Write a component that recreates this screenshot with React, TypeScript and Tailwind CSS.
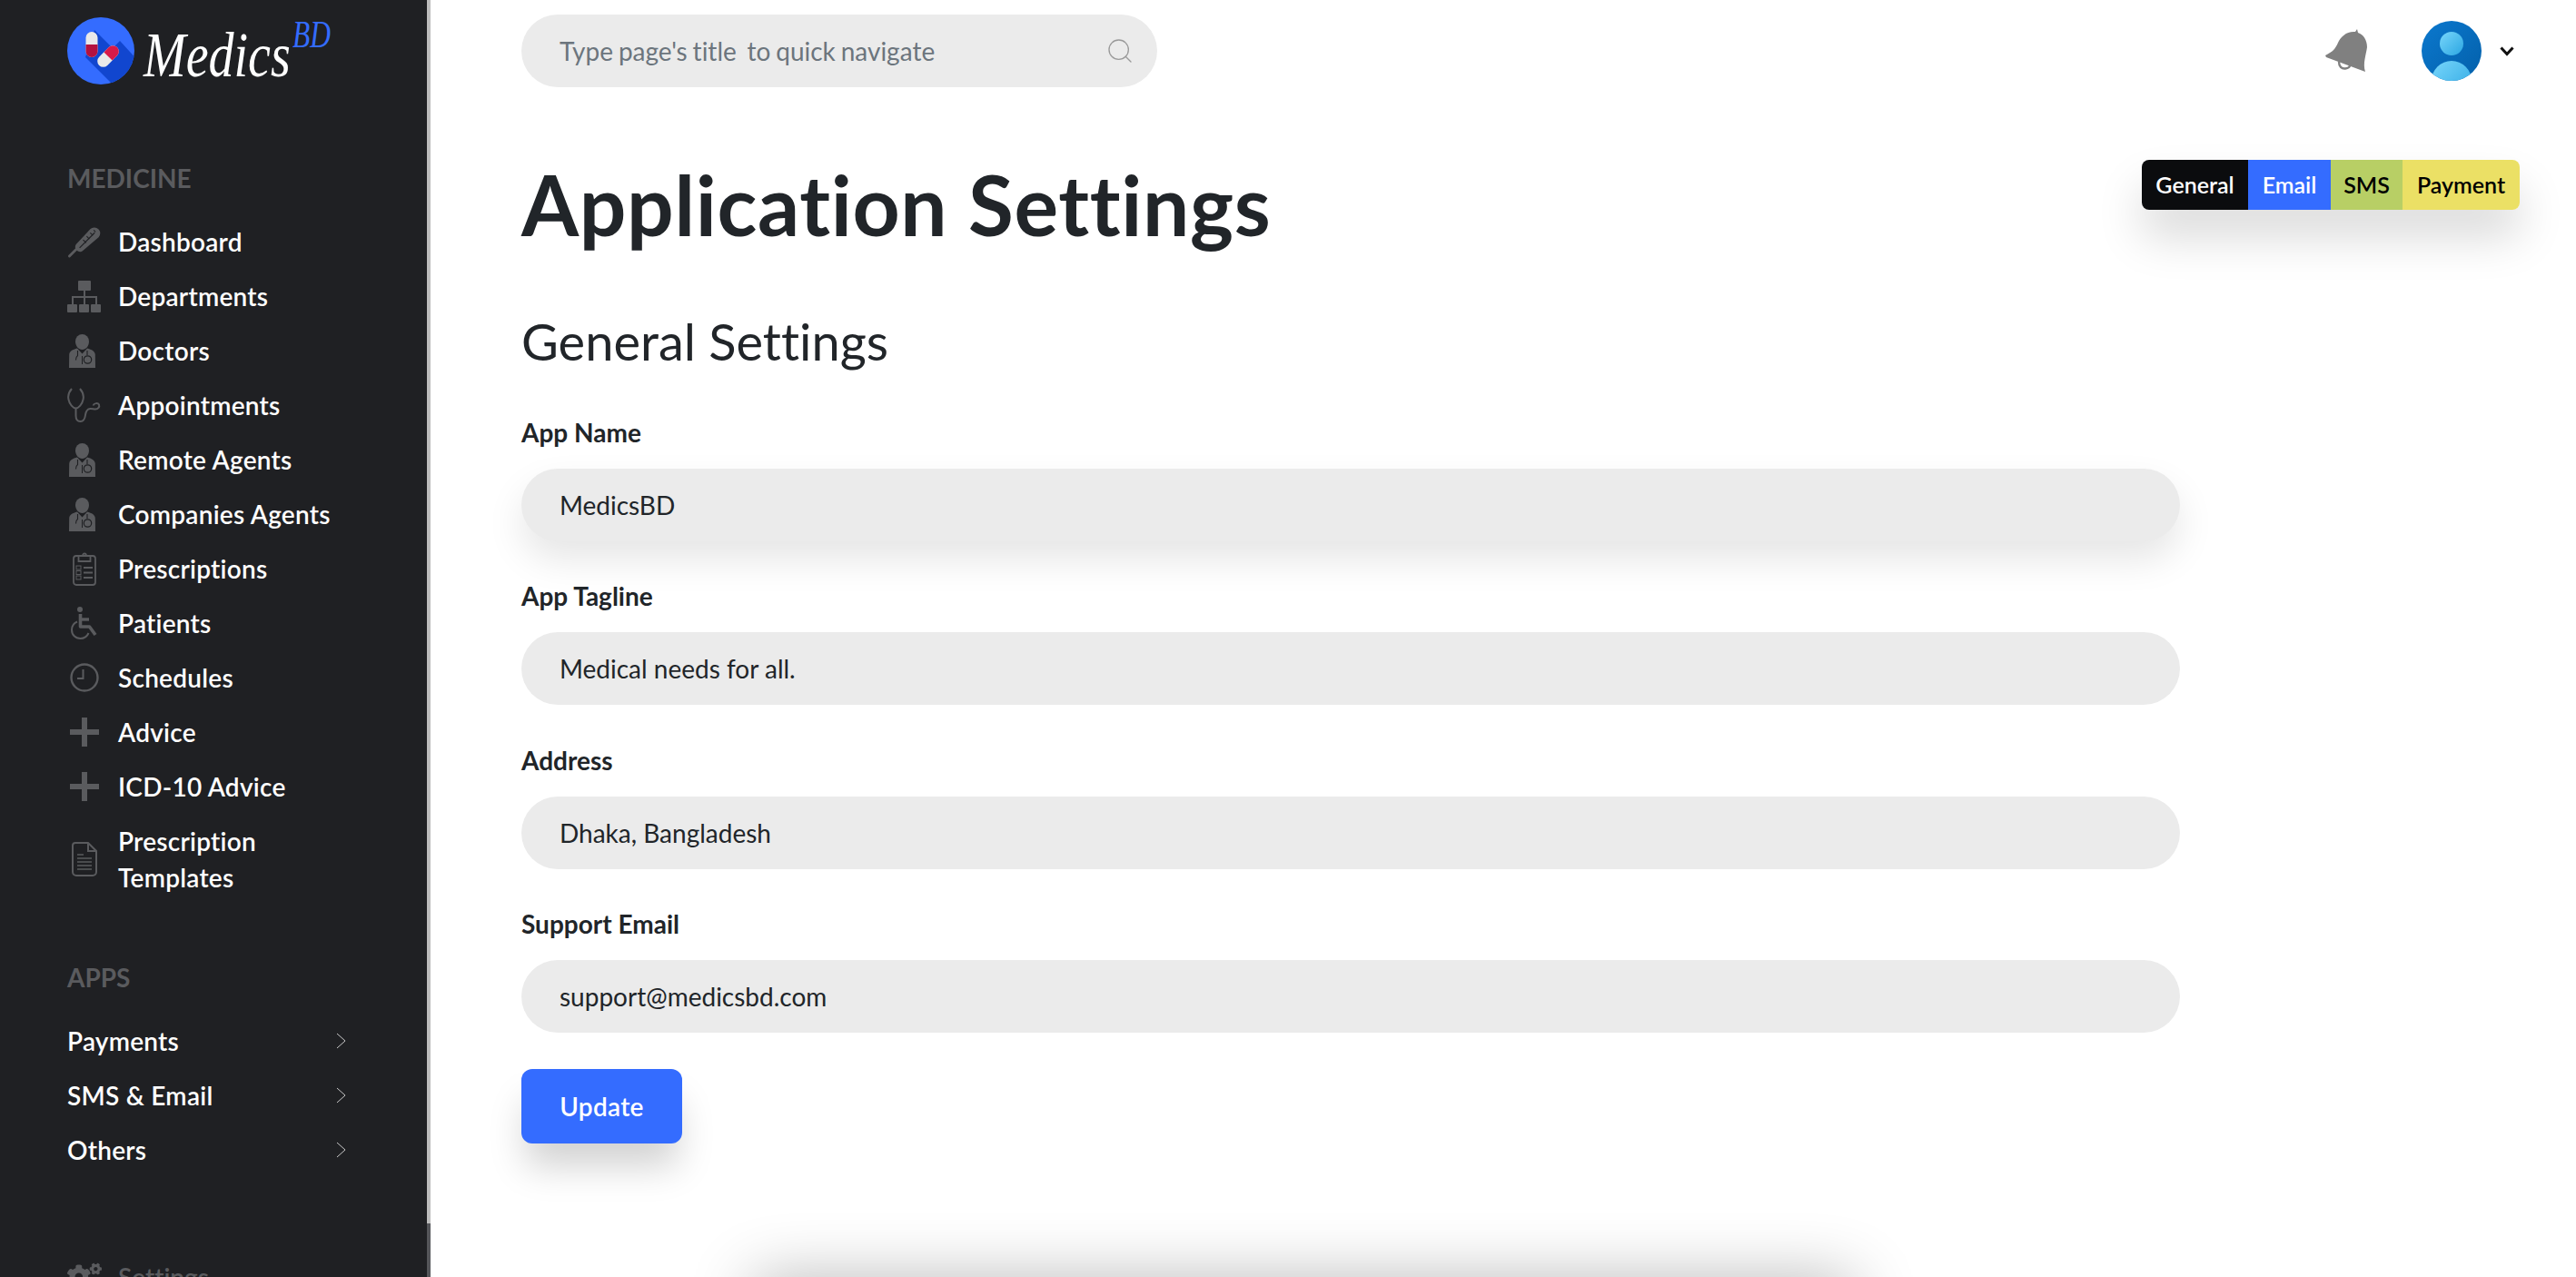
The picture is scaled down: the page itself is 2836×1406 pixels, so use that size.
import React from "react";
import { FaCogs } from "react-icons/fa";
import { Search } from "lucide-react";

const G = "#5a5b5e";
const BG = "#1f2023";

function Thermo() {
  return (
    <svg width="38" height="38" viewBox="0 0 38 38">
      <path d="M2.500 35.500L12 26" stroke={G} strokeWidth="3" strokeLinecap="round" />
      <path d="M10 22L26 5a6.500 6.500 0 0 1 9.500 9L18 29c-3 2.500-5.500 1.500-7 0s-3-4-1-7z" fill={G} />
      <path d="M14 26L31 9" stroke={BG} strokeWidth="1.200" />
      <path d="M18 17l3.500 3.500M22 13l3 3M26 9l3 3M30 6l2 2" stroke={BG} strokeWidth="1.100" />
    </svg>
  );
}
function Sitemap() {
  return (
    <svg width="37" height="35" viewBox="0 0 37 35" fill={G}>
      <rect x="12" y="0" width="14" height="11" rx="1" />
      <rect x="0" y="26" width="11" height="9" rx="1" />
      <rect x="13" y="26" width="11" height="9" rx="1" />
      <rect x="26" y="26" width="11" height="9" rx="1" />
      <path d="M18 11h2v6h13v9h-2v-7H20v7h-2v-7H7v7H5v-9h13z" />
    </svg>
  );
}
function Doctor() {
  return (
    <svg width="33" height="37" viewBox="0 0 33 37">
      <path d="M7 8a7.500 8 0 0 1 15 0c0 5-3.500 9-7.500 9S7 13 7 8z" fill={G} />
      <path d="M9 15.500l5.500 6 5.500-6c5 1.500 8.500 3 8.800 7l.2 14.500H0l.2-14.500c.3-4 3.800-5.500 8.800-7z" fill={G} />
      <path d="M9.500 18v5.500c-1.500 1-2 3-2 5M20 18v5" stroke={BG} strokeWidth="1.100" fill="none" />
      <path d="M14.500 24v9" stroke={BG} strokeWidth="1" />
      <circle cx="20.500" cy="28" r="4.200" stroke={BG} strokeWidth="1.200" fill="none" />
    </svg>
  );
}
function Stetho() {
  return (
    <svg width="37" height="38" viewBox="0 0 37 38" fill="none" stroke={G} strokeWidth="2">
      <path d="M5 1C1.500 5 .5 9 1.500 13c1 5 5 9.500 8 9.500s7-4.500 8-9.500c1-4 0-8-3.500-12" />
      <path d="M9.500 22.500v8c0 4 2 6.500 5 6.500s5-3 5.500-7c.5-4 2-6.500 5-7 2-.4 4 .5 6 .5 3 0 5-2.500 4-5-1-2-5.500-2-6.500 1" />
    </svg>
  );
}
function Clipboard() {
  return (
    <svg width="26" height="37" viewBox="0 0 26 37" fill="none" stroke={G} strokeWidth="1.800">
      <rect x="1" y="4" width="24" height="32" rx="3" />
      <path d="M6.500 4h13v6h-13zM11 4c0-3.500 4-3.500 4 0" strokeWidth="1.800" />
      <path d="M12 17h10M12 22.500h10M12 28h10" />
      <rect x="4" y="15" width="5" height="4" strokeWidth="1" />
      <rect x="4" y="20.500" width="5" height="4" strokeWidth="1" />
      <rect x="4" y="26" width="5" height="4" strokeWidth="1" />
    </svg>
  );
}
function Wheelchair() {
  return (
    <svg width="30" height="36" viewBox="0 0 30 36" fill="none" stroke={G}>
      <circle cx="10" cy="3" r="3" fill={G} stroke="none" />
      <path d="M10.500 8v14h10l6.500 9" strokeWidth="3.600" strokeLinejoin="round" />
      <path d="M11 14h9" strokeWidth="3.400" />
      <path d="M7 16.500C3.500 18 1 21 1 25.500 1 31 5 35 10.500 35c4.500 0 7.500-2.500 9-6" strokeWidth="2" />
    </svg>
  );
}
function Clock() {
  return (
    <svg width="32" height="32" viewBox="0 0 32 32" fill="none" stroke={G} strokeWidth="2.400">
      <circle cx="16" cy="16" r="14.500" />
      <path d="M14.500 7v10H8" strokeWidth="2" />
    </svg>
  );
}
function Plus() {
  return (
    <svg width="32" height="32" viewBox="0 0 32 32" fill={G}>
      <path d="M13 0h6v13h13v6H19v13h-6V19H0v-6h13z" />
    </svg>
  );
}
function Doc() {
  return (
    <svg width="28" height="38" viewBox="0 0 28 38" fill="none" stroke={G} strokeWidth="2">
      <path d="M4 1h14l9 9v23a4 4 0 0 1-4 4H5a4 4 0 0 1-4-4V4a3 3 0 0 1 3-3z" />
      <path d="M18 1v9h9" />
      <path d="M6 14h7M6 18h16M6 22h16M6 26h16M6 30h16" strokeWidth="1.600" />
    </svg>
  );
}
function Logo() {
  return (
    <svg width="74" height="74" viewBox="0 0 74 74">
      <defs>
        <clipPath id="lc"><circle cx="37" cy="37" r="37" /></clipPath>
      </defs>
      <circle cx="37" cy="37" r="37" fill="#346cff" />
      <path d="M30 14 L50 34 L58 26 L80 50 L74 74 L50 74 L20 44 Z" fill="#1146cf" clipPath="url(#lc)" />
      <rect x="20.500" y="16" width="13" height="28" rx="6.500" fill="#e9e9e9" />
      <path d="M20.500 30h13v7.500a6.500 6.500 0 0 1-13 0z" fill="#b3123f" />
      <g transform="rotate(45 45 43)">
        <rect x="38.500" y="29" width="13" height="28" rx="6.500" fill="#e9e9e9" />
        <path d="M38.500 43v-7.500a6.500 6.500 0 0 1 13 0V43z" fill="#d81a49" />
      </g>
    </svg>
  );
}
function Bell() {
  return (
    <svg width="47" height="48" viewBox="0 0 47 48">
      <path d="M33 3C24 2 17 8 14 15 11 22 8 25 0 29l1 2 43 16c-3-9 1-19 2-27 0-8-4-14-10-16l-1-4z" fill="#808080" />
      <path d="M15 36c0 5 3 8 7 7.500 3-.5 5-2 5-3.500" fill="none" stroke="#808080" strokeWidth="2.400" />
    </svg>
  );
}
function Avatar() {
  return (
    <svg width="66" height="66" viewBox="0 0 66 66">
      <defs>
        <linearGradient id="ab" x1="0" y1="0" x2="1" y2="1"><stop offset="0" stopColor="#0b78ce" /><stop offset="1" stopColor="#0360aa" /></linearGradient>
        <linearGradient id="ah" x1="0" y1="0" x2="1" y2="1"><stop offset="0" stopColor="#78d6fb" /><stop offset="1" stopColor="#2ba6e2" /></linearGradient>
        <clipPath id="ac"><circle cx="33" cy="33" r="33" /></clipPath>
      </defs>
      <circle cx="33" cy="33" r="33" fill="url(#ab)" />
      <circle cx="33" cy="25" r="13" fill="url(#ah)" />
      <ellipse cx="33" cy="66" rx="22" ry="22" fill="url(#ah)" clipPath="url(#ac)" />
    </svg>
  );
}

const medicine: [string, React.ReactNode][] = [
  ["Dashboard", <Thermo />],
  ["Departments", <Sitemap />],
  ["Doctors", <Doctor />],
  ["Appointments", <Stetho />],
  ["Remote Agents", <Doctor />],
  ["Companies Agents", <Doctor />],
  ["Prescriptions", <Clipboard />],
  ["Patients", <Wheelchair />],
  ["Schedules", <Clock />],
  ["Advice", <Plus />],
  ["ICD-10 Advice", <Plus />],
];

function NavRow({ icon, label }: { icon: React.ReactNode; label: React.ReactNode }) {
  return (
    <div className="flex min-h-[60px] items-center">
      <div className="mr-[19px] flex h-[40px] w-[37px] shrink-0 items-center justify-center">{icon}</div>
      <div className="w-[240px] font-semibold leading-[40px] tracking-[0.25px] text-white">{label}</div>
    </div>
  );
}
function AppRow({ label }: { label: string }) {
  return (
    <div className="flex h-[60px] w-[307px] items-center justify-between font-semibold tracking-[0.25px] text-white">
      <span>{label}</span>
      <svg width="11" height="18" viewBox="0 0 11 18" fill="none" stroke="#c8c8c8" strokeWidth="1">
        <path d="M1 1l9 8-9 8" />
      </svg>
    </div>
  );
}
function Field({ label, value, raised }: { label: string; value: string; raised?: boolean }) {
  return (
    <div className="mb-[40.4px]">
      <div className="mb-[20px] h-[40px] font-bold leading-[40px] text-[#212529]">{label}</div>
      <div
        className={
          "flex h-[80px] items-center rounded-[40px] bg-[#ebebeb] px-[42px] text-[#212529] " +
          (raised ? "shadow-[0_20px_40px_rgba(0,0,0,0.1)]" : "")
        }
      >
        {value}
      </div>
    </div>
  );
}

export default function App() {
  return (
    <div className="flex h-[1406px] overflow-hidden bg-white font-['Lato',sans-serif] text-[28px] [font-variant-ligatures:none]">
      <aside className="w-[470px] shrink-0 bg-[#1f2023] pl-[74px]">
        <div className="flex h-[176px] items-start pt-[19px]">
          <Logo />
          <span className="ml-[10px] mt-[2px] w-[164px] origin-left scale-x-[0.8] font-['Liberation_Serif',serif] text-[70px] italic leading-[80px] text-white">Medics</span>
          <span className="ml-[0px] mt-[-1px] w-[44px] origin-left scale-x-[0.75] font-['Liberation_Serif',serif] text-[42px] italic leading-[40px] text-[#346cff]">BD</span>
        </div>
        <div className="mb-[20px] h-[40px] font-bold uppercase leading-[40px] text-[#5a5b5e]">Medicine</div>
        {medicine.map(([l, i]) => (
          <NavRow key={l} icon={i} label={l} />
        ))}
        <div className="py-[10px]">
          <NavRow icon={<Doc />} label={<>Prescription<br />Templates</>} />
        </div>
        <div className="mb-[20px] mt-[60px] h-[40px] font-bold leading-[40px] text-[#5a5b5e]">APPS</div>
        <AppRow label="Payments" />
        <AppRow label="SMS & Email" />
        <AppRow label="Others" />
        <div className="mt-[80px] flex h-[60px] items-center font-semibold text-[#5a5b5e]">
          <div className="w-[56px]"><FaCogs size={38} color={G} /></div>
          Settings
        </div>
      </aside>
      <div className="flex w-[4px] shrink-0 flex-col">
        <div className="h-[1347px] bg-[#bdbdbd]" />
        <div className="flex-1 bg-[#55565a]" />
      </div>
      <main className="min-w-0 flex-1 pl-[100px] pr-[62px]">
        <header className="flex h-[96px] items-start justify-between pt-[16px]">
          <div className="flex h-[80px] w-[700px] items-center justify-between rounded-[40px] bg-[#ebebeb] pl-[42px] pr-[25px] text-[#6c757d]">
            <span className="whitespace-pre [word-spacing:-1.3px]">Type page's title  to quick navigate</span>
            <Search size={32} strokeWidth={1} color="#9a9a9a" />
          </div>
          <div className="flex items-center pr-[6px] pt-[7px]">
            <Bell />
            <div className="ml-[59px]"><Avatar /></div>
            <svg width="16" height="11" viewBox="0 0 16 11" className="ml-[20px]" fill="none" stroke="#111" strokeWidth="3">
              <path d="M1.500 1.500L8 8.500l6.500-7" />
            </svg>
          </div>
        </header>
        <div className="flex items-start justify-between">
          <h1 className="mt-[75px] text-[91px] font-bold leading-[108px] tracking-[0.65px] text-[#212529]">Application Settings</h1>
          <div className="mt-[80px] flex h-[55px] overflow-hidden rounded-[8px] font-semibold leading-[55px] text-[25px] shadow-[0_30px_50px_rgba(0,0,0,0.15)]">
            <div className="w-[117px] bg-[#0b0c0e] text-center text-white">General</div>
            <div className="w-[91px] bg-[#346cff] text-center text-white">Email</div>
            <div className="w-[79px] bg-[#b8cf65] text-center text-black">SMS</div>
            <div className="w-[129px] bg-[#ebe065] text-center text-black">Payment</div>
          </div>
        </div>
        <div className="w-[1826px]">
          <h2 className="mt-[63px] mb-[47px] text-[56px] font-normal leading-[67px] text-[#212529]">General Settings</h2>
          <Field label="App Name" value="MedicsBD" raised />
          <Field label="App Tagline" value="Medical needs for all." />
          <Field label="Address" value="Dhaka, Bangladesh" />
          <Field label="Support Email" value="support@medicsbd.com" />
          <button className="-mt-[1px] block h-[82px] w-[177px] rounded-[12px] bg-[#346cff] font-semibold tracking-[0.3px] text-white shadow-[0_30px_40px_-5px_rgba(0,0,0,0.18)]">Update</button>
          <div className="ml-[256px] mt-[150px] h-[60px] w-[1210px] bg-white shadow-[0_0_70px_rgba(0,0,0,0.3)]" />
        </div>
      </main>
    </div>
  );
}
